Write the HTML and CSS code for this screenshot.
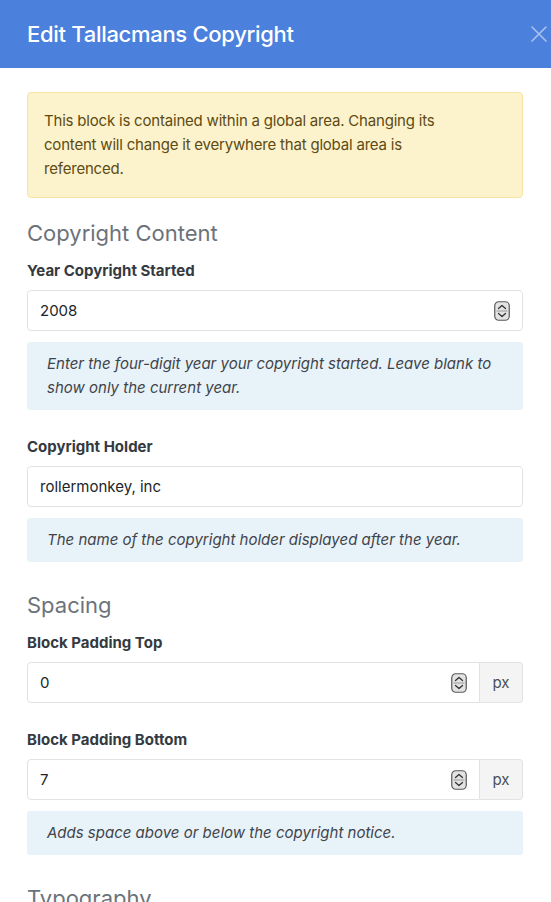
FILE: index.html
```html
<!DOCTYPE html>
<html lang="en">
<head>
<meta charset="utf-8">
<title>Edit Tallacmans Copyright</title>
<link rel="stylesheet" href="styles.css">
</head>
<body>
<div class="modal">
  <header class="modal-header">
    <h1 class="modal-title">Edit Tallacmans Copyright</h1>
    <button class="close" type="button" aria-label="Close">
      <svg width="16" height="16" viewBox="0 0 16 16"><path d="M1 1 L15 15 M15 1 L1 15" stroke="currentColor" stroke-width="1.6" stroke-linecap="round" fill="none"/></svg>
    </button>
  </header>
  <div class="modal-body">
    <div class="alert">This block is contained within a global area. Changing its content will change it everywhere that global area is referenced.</div>

    <h2 class="section-title first">Copyright Content</h2>
    <div class="field">
      <label class="label">Year Copyright Started</label>
      <div class="control">
        <input class="control-input" type="text" value="2008">
        <svg class="spin" width="16" height="20" viewBox="0 0 16 20"><rect x="0.75" y="0.75" width="14.5" height="18.5" rx="4" fill="#e3e3e3" stroke="#5a5a5a" stroke-width="1.2"/><path d="M4.5 7.5 L8 4.5 L11.5 7.5 M4.5 12.5 L8 15.5 L11.5 12.5" stroke="#333" stroke-width="1.3" fill="none" stroke-linecap="round" stroke-linejoin="round"/><path d="M2.5 10 H13.5" stroke="#9a9a9a" stroke-width="1"/></svg>
      </div>
      <div class="help">Enter the four-digit year your copyright started. Leave blank to show only the current year.</div>
    </div>

    <div class="field">
      <label class="label">Copyright Holder</label>
      <div class="control">
        <input class="control-input" type="text" value="rollermonkey, inc">
      </div>
      <div class="help">The name of the copyright holder displayed after the year.</div>
    </div>

    <h2 class="section-title">Spacing</h2>
    <div class="field">
      <label class="label">Block Padding Top</label>
      <div class="group">
        <div class="control grouped">
          <input class="control-input" type="text" value="0">
          <svg class="spin" width="16" height="20" viewBox="0 0 16 20"><rect x="0.75" y="0.75" width="14.5" height="18.5" rx="4" fill="#e3e3e3" stroke="#5a5a5a" stroke-width="1.2"/><path d="M4.5 7.5 L8 4.5 L11.5 7.5 M4.5 12.5 L8 15.5 L11.5 12.5" stroke="#333" stroke-width="1.3" fill="none" stroke-linecap="round" stroke-linejoin="round"/><path d="M2.5 10 H13.5" stroke="#9a9a9a" stroke-width="1"/></svg>
        </div>
        <span class="addon">px</span>
      </div>
    </div>

    <div class="field">
      <label class="label">Block Padding Bottom</label>
      <div class="group">
        <div class="control grouped">
          <input class="control-input" type="text" value="7">
          <svg class="spin" width="16" height="20" viewBox="0 0 16 20"><rect x="0.75" y="0.75" width="14.5" height="18.5" rx="4" fill="#e3e3e3" stroke="#5a5a5a" stroke-width="1.2"/><path d="M4.5 7.5 L8 4.5 L11.5 7.5 M4.5 12.5 L8 15.5 L11.5 12.5" stroke="#333" stroke-width="1.3" fill="none" stroke-linecap="round" stroke-linejoin="round"/><path d="M2.5 10 H13.5" stroke="#9a9a9a" stroke-width="1"/></svg>
        </div>
        <span class="addon">px</span>
      </div>
      <div class="help">Adds space above or below the copyright notice.</div>
    </div>

    <h2 class="section-title">Typography</h2>
  </div>
</div>
</body>
</html>
```
FILE: styles.css
```css
html, body {
  margin: 0;
  padding: 0;
  overflow: hidden;
  background: #ffffff;
}
body {
  font-family: Inter, "Noto Sans", sans-serif;
  font-size: 15px;
  line-height: 24px;
  color: #212529;
}
.modal {
  width: 551px;
}
.modal-header {
  height: 68px;
  background: #4b80dc;
  display: flex;
  align-items: center;
  justify-content: space-between;
  padding: 0 3px 0 27px;
  box-sizing: border-box;
}
.modal-title {
  margin: 0;
  font-size: 22px;
  font-weight: 500;
  line-height: 28px;
  letter-spacing: -0.3px;
  color: #ffffff;
}
.close {
  border: 0;
  background: transparent;
  padding: 0;
  margin: 0;
  width: 18px;
  height: 18px;
  color: #a9c2ee;
  display: flex;
  align-items: center;
  justify-content: center;
}
.modal-body {
  padding: 24px 28px 0 27px;
}
.alert {
  background: #fcf3cd;
  border: 1px solid #f8e3a1;
  border-radius: 4px;
  color: #5e4b12;
  padding: 16px 80px 16px 16px;
  letter-spacing: -0.2px;
}
.section-title {
  margin: 30px 0 13px;
  font-size: 22px;
  font-weight: 400;
  line-height: 26px;
  color: #6c727a;
}
.section-title.first {
  margin-top: 22px;
}
.field + .field {
  margin-top: 25px;
}
.label {
  display: block;
  font-weight: 700;
  color: #343a40;
  margin-bottom: 7px;
}
.control {
  display: flex;
  align-items: center;
  height: 41px;
  box-sizing: border-box;
  border: 1px solid #e0e3e6;
  border-radius: 4px;
  background: #fff;
  padding: 0 12px 0 12px;
}
.control-input {
  flex: 1;
  min-width: 0;
  border: 0;
  outline: none;
  padding: 0;
  font: inherit;
  color: #212529;
  background: transparent;
}
.spin {
  flex: none;
  display: block;
}
.group {
  display: flex;
}
.control.grouped {
  flex: 1;
  border-radius: 4px 0 0 4px;
}
.addon {
  width: 43px;
  height: 41px;
  box-sizing: border-box;
  display: flex;
  align-items: center;
  justify-content: center;
  background: #f4f4f4;
  border: 1px solid #e0e3e6;
  border-left: 0;
  border-radius: 0 4px 4px 0;
  color: #495057;
}
.help {
  margin-top: 11px;
  background: #e8f2f9;
  border-radius: 3px;
  padding: 10px 20px 10px 20px;
  font-style: italic;
  color: #3f444a;
}
```
